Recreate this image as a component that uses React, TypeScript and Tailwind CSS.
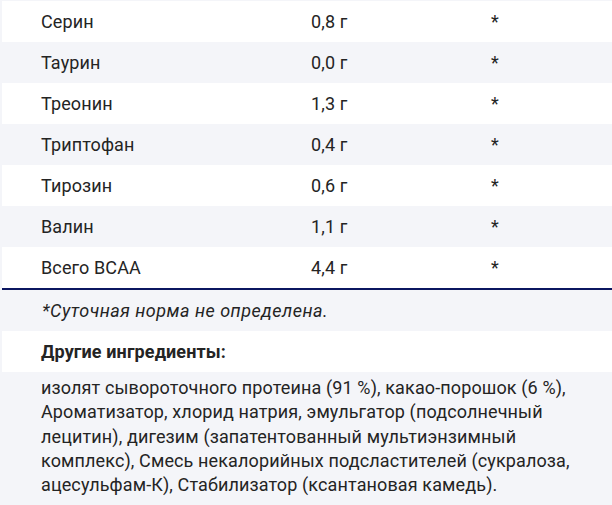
const rows = [
  { name: 'Серин', amount: '0,8 г' },
  { name: 'Таурин', amount: '0,0 г' },
  { name: 'Треонин', amount: '1,3 г' },
  { name: 'Триптофан', amount: '0,4 г' },
  { name: 'Тирозин', amount: '0,6 г' },
  { name: 'Валин', amount: '1,1 г' },
  { name: 'Всего BCAA', amount: '4,4 г' },
];

export default function App() {
  return (
    <div className="min-h-[505px] w-[612px] bg-[#f4f5f9] pl-[2px] pt-px font-['Roboto',sans-serif] text-[18px] tracking-[0.12px] text-[#242424]">
      <div>
        {rows.map((r, i) => (
          <div
            key={r.name}
            className={`grid h-[41px] grid-cols-[270px_180px_1fr] items-center pl-[39px] ${
              i % 2 === 0 ? 'bg-white' : 'bg-[#f4f5f9]'
            }`}
          >
            <span>{r.name}</span>
            <span>{r.amount}</span>
            <span>*</span>
          </div>
        ))}
      </div>
      <div className="h-[2px] bg-[#0b1660]" />
      <div className="flex h-[41px] items-center pl-[40px] italic tracking-[0.5px]">*Суточная норма не определена.</div>
      <div className="flex h-[41px] items-center bg-white pl-[39px] font-bold">Другие ингредиенты:</div>
      <p className="pl-[39px] pr-[20px] pt-[4px] leading-[24.3px]">
        изолят сывороточного протеина (91 %), какао-порошок (6 %), Ароматизатор, хлорид натрия, эмульгатор (подсолнечный
        лецитин), дигезим (запатентованный мультиэнзимный комплекс), Смесь некалорийных подсластителей (сукралоза,
        ацесульфам-К), Стабилизатор (ксантановая камедь).
      </p>
    </div>
  );
}
